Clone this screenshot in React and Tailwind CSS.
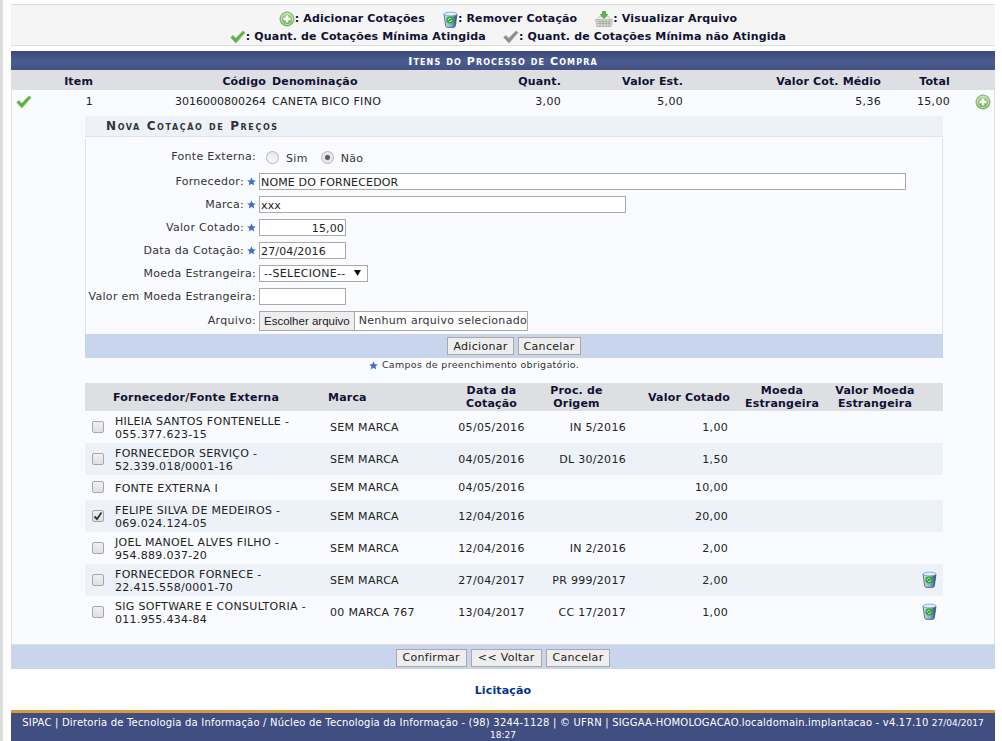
import React from 'react';

const PlusIcon = () => (
    <svg width="16" height="16" viewBox="0 0 16 16" className="shrink-0">
        <defs>
            <linearGradient id="plusFill" x1="0" y1="0" x2="0" y2="1">
                <stop offset="0" stopColor="#b5dca0" />
                <stop offset="1" stopColor="#5cab4a" />
            </linearGradient>
        </defs>
        <circle cx="8" cy="8" r="7" fill="url(#plusFill)" stroke="#7fb06f" strokeWidth="1" />
        <circle cx="8" cy="8" r="5.6" fill="none" stroke="#d6edc9" strokeWidth="0.8" />
        <path d="M6.8 4.5h2.4v2.3h2.3v2.4H9.2v2.3H6.8V9.2H4.5V6.8h2.3z" fill="#fff" />
    </svg>
);

const TrashIcon = () => (
    <svg width="15" height="17" viewBox="0 0 15 17" className="shrink-0">
        <defs>
            <linearGradient id="binFill" x1="0" y1="0" x2="1" y2="0">
                <stop offset="0" stopColor="#c6deee" />
                <stop offset="0.6" stopColor="#7fa9cc" />
                <stop offset="1" stopColor="#1f4570" />
            </linearGradient>
        </defs>
        <path d="M1 3.2 2.6 14.6q.3 1.8 1.7 1.8h6.4q1.4 0 1.7-1.8L14 3.2z" fill="url(#binFill)" stroke="#2a4d6c" strokeWidth="0.7" />
        <ellipse cx="7.5" cy="3" rx="6.6" ry="1.9" fill="#dfeef8" stroke="#6d97b6" strokeWidth="0.7" />
        <circle cx="7" cy="9" r="3.6" fill="#2fa52c" />
        <path d="M5.2 9a1.8 1.8 0 0 1 3-1.2M8.8 9a1.8 1.8 0 0 1-3 1.2" fill="none" stroke="#d5f2cf" strokeWidth="1" />
    </svg>
);

const BasketIcon = () => (
    <svg width="18" height="16" viewBox="0 0 18 16" className="shrink-0">
        <path d="M.6 8.5h16.8l-1.3 7H1.9z" fill="#dcdcd6" stroke="#a4a49c" strokeWidth="0.7" />
        <path d="M2 10.6h14M2.3 12.6h13.4M5 9v6M8 9v6M11 9v6M14 9v6" stroke="#96968f" strokeWidth="0.6" />
        <path d="M2.4 8.5 4 5.6h10l1.6 2.9z" fill="#efefe9" stroke="#b0b0a8" strokeWidth="0.5" />
        <path d="M7.3.5h3.4v3h2.1L9 7.6 5.2 3.5h2.1z" fill="#62b548" stroke="#3f8a2c" strokeWidth="0.6" />
    </svg>
);

const CheckIcon = ({ gray }) => (
    <svg width="16" height="14" viewBox="0 0 16 14" className="shrink-0">
        <path
            d="M.6 7.4 2.8 5.2l2.9 3L13 .8l2.2 1.8L5.9 13.2z"
            fill={gray ? '#8c8c8c' : '#5fae48'}
            stroke={gray ? '#b5b5b5' : '#9bd188'}
            strokeWidth="0.7"
        />
    </svg>
);

const Star = () => (
    <svg width="9" height="9" viewBox="0 0 10 10" className="shrink-0">
        <path d="M5 .3 6.4 3.6l3.4.2-2.6 2.2.9 3.5L5 7.6 1.9 9.5l.9-3.5L.2 3.8l3.4-.2z" fill="#3f6fc4" />
    </svg>
);

const Button = ({ children, wide }) => (
    <button
        type="button"
        className={`h-[18px] border border-[#a9a9a9] bg-[#eeeeee] text-[11px] leading-none tracking-[0.3px] text-[#222] ${wide ? 'px-[6px]' : 'px-[5px]'}`}
    >
        {children}
    </button>
);

const FormRow = ({ label, required, tall, children }) => (
    <div className={`flex items-center ${tall ? 'h-[26px]' : 'h-[23px]'}`}>
        <div className="flex w-[170px] shrink-0 items-center justify-end gap-[3px] whitespace-nowrap text-[#333]">
            {label}
            {required && <Star />}
        </div>
        <div className="ml-[3px] flex items-center">{children}</div>
    </div>
);

const TextInput = ({ value, width, right }) => (
    <input
        readOnly
        value={value}
        className={`h-[17px] border border-[#a9a9a9] bg-white pt-[1px] text-[11px] tracking-[0.15px] text-[#222] outline-none ${width} ${right ? 'px-[1px] text-right' : 'pl-[1px]'}`}
    />
);

const Radio = ({ checked, label }) => (
    <label className="flex items-center">
        <input
            type="radio"
            readOnly
            checked={checked}
            className="h-[13px] w-[13px] appearance-none rounded-full border border-[#b5b5b5] bg-[linear-gradient(#e8e8e8,#f8f8f8)] checked:bg-[radial-gradient(circle,#555_0,#666_28%,#e4e4e4_38%,#f4f4f4_100%)]"
        />
        <span className="ml-[7px] mt-[3px] text-[#333]">{label}</span>
    </label>
);

const cotacoes = [
    { nome: ['HILEIA SANTOS FONTENELLE -', '055.377.623-15'], marca: 'SEM MARCA', data: '05/05/2016', proc: 'IN 5/2016', valor: '1,00' },
    { nome: ['FORNECEDOR SERVIÇO -', '52.339.018/0001-16'], marca: 'SEM MARCA', data: '04/05/2016', proc: 'DL 30/2016', valor: '1,50' },
    { nome: ['FONTE EXTERNA I'], marca: 'SEM MARCA', data: '04/05/2016', proc: '', valor: '10,00' },
    { nome: ['FELIPE SILVA DE MEDEIROS -', '069.024.124-05'], marca: 'SEM MARCA', data: '12/04/2016', proc: '', valor: '20,00', checked: true },
    { nome: ['JOEL MANOEL ALVES FILHO -', '954.889.037-20'], marca: 'SEM MARCA', data: '12/04/2016', proc: 'IN 2/2016', valor: '2,00' },
    { nome: ['FORNECEDOR FORNECE -', '22.415.558/0001-70'], marca: 'SEM MARCA', data: '27/04/2017', proc: 'PR 999/2017', valor: '2,00', remove: true },
    { nome: ['SIG SOFTWARE E CONSULTORIA -', '011.955.434-84'], marca: '00 MARCA 767', data: '13/04/2017', proc: 'CC 17/2017', valor: '1,00', remove: true },
];

const itemCols = 'grid grid-cols-[82px_173px_134px_161px_122px_198px_69px_45px] items-center';
const cotCols = 'grid grid-cols-[28px_215px_130px_67px_103px_102px_2px_100px_86px_25px] items-center';

const App = () => {
    return (
        <div className="h-[741px] overflow-hidden bg-white font-['DejaVu_Sans','Liberation_Sans',sans-serif] text-[11px] leading-[14px] tracking-[0.3px] text-[#222]">
            <div className="absolute left-0 top-0 h-[741px] w-[3px] bg-[#dddddd]" />
            <div className="ml-[11px] w-[984px] pt-[4px]">
                {/* Legenda */}
                <div className="h-[42px] border-y border-[#dcdcdc] bg-[#f5f5f5] pl-[10px] pt-[5px] font-bold tracking-[0.15px] text-[#111133]">
                    <div className="flex h-[18px] items-center justify-center">
                        <PlusIcon />
                        <span className="mr-[18px]">: Adicionar Cotações</span>
                        <TrashIcon />
                        <span className="mr-[18px]">: Remover Cotação</span>
                        <BasketIcon />
                        <span>: Visualizar Arquivo</span>
                    </div>
                    <div className="flex h-[18px] items-center justify-center">
                        <CheckIcon />
                        <span className="mr-[17px]">: Quant. de Cotações Mínima Atingida</span>
                        <CheckIcon gray />
                        <span>: Quant. de Cotações Mínima não Atingida</span>
                    </div>
                </div>

                {/* Itens */}
                <div className="mt-[5px] flex h-[19px] items-center justify-center bg-[linear-gradient(#3c4a78,#4c5c90_55%,#435282)] pt-[2px] font-bold tracking-[1.1px] text-white [font-variant:small-caps]">
                    Itens do Processo de Compra
                </div>
                <div className={`${itemCols} h-[20px] bg-[#dedfe3] pt-[4px] font-bold tracking-[0.15px] text-[#111133]`}>
                    <div className="text-right">Item</div>
                    <div className="text-right">Código</div>
                    <div className="pl-[6px]">Denominação</div>
                    <div className="text-right">Quant.</div>
                    <div className="text-right">Valor Est.</div>
                    <div className="text-right">Valor Cot. Médio</div>
                    <div className="text-right">Total</div>
                    <div />
                </div>
                <div className="h-[554px] border-x border-[#e2e3e8] bg-[#fafbfe]">
                    <div className={`${itemCols} -ml-[1px] h-[26px] pb-[2px]`}>
                        <div className="flex items-center justify-between pl-[5px]">
                            <CheckIcon />
                            <span>1</span>
                        </div>
                        <div className="text-right tracking-normal">3016000800264</div>
                        <div className="whitespace-nowrap pl-[6px]">CANETA BICO FINO</div>
                        <div className="text-right">3,00</div>
                        <div className="text-right">5,00</div>
                        <div className="text-right">5,36</div>
                        <div className="text-right">15,00</div>
                        <div className="flex justify-end pr-[4px]"><PlusIcon /></div>
                    </div>

                    {/* Nova cotação */}
                    <div className="ml-[73px] w-[858px]">
                        <div className="flex h-[21px] items-center border-b border-[#dfe4ee] bg-[#edf1f8] pl-[21px] text-[12px] font-bold tracking-[1.6px] text-[#333] [font-variant:small-caps]">
                            Nova Cotação de Preços
                        </div>
                        <div className="mt-[2px] border-x border-[#e2e3e8] pt-[5px]">
                            <FormRow label="Fonte Externa:" tall>
                                <div className="flex gap-[13px] pl-[7px]">
                                    <Radio label="Sim" />
                                    <Radio label="Não" checked />
                                </div>
                            </FormRow>
                            <FormRow label="Fornecedor:" required>
                                <TextInput value="NOME DO FORNECEDOR" width="w-[647px]" />
                            </FormRow>
                            <FormRow label="Marca:" required>
                                <TextInput value="xxx" width="w-[367px]" />
                            </FormRow>
                            <FormRow label="Valor Cotado:" required>
                                <TextInput value="15,00" width="w-[87px]" right />
                            </FormRow>
                            <FormRow label="Data da Cotação:" required>
                                <TextInput value="27/04/2016" width="w-[87px]" />
                            </FormRow>
                            <FormRow label="Moeda Estrangeira:">
                                <div className="relative h-[17px] w-[109px] border border-[#a9a9a9] bg-white pl-[4px] text-[11px] leading-[15px] text-[#222]">
                                    --SELECIONE--
                                    <svg width="7" height="6" viewBox="0 0 7 6" className="absolute right-[6px] top-[4px]">
                                        <path d="M0 0h7L3.5 6z" fill="#111" />
                                    </svg>
                                </div>
                            </FormRow>
                            <FormRow label="Valor em Moeda Estrangeira:">
                                <TextInput value="" width="w-[87px]" />
                            </FormRow>
                            <FormRow label="Arquivo:" tall>
                                <div className="flex h-[20px] w-[269px] items-center border border-[#a9a9a9] bg-white">
                                    <div className="flex h-full w-[98px] items-center justify-center border-r border-[#a9a9a9] bg-[#eeeeee] font-['Liberation_Sans',sans-serif] text-[11.5px] tracking-normal text-[#222]">
                                        Escolher arquivo
                                    </div>
                                    <span className="ml-[4px] whitespace-nowrap text-[#333]">Nenhum arquivo selecionado</span>
                                </div>
                            </FormRow>
                        </div>
                        <div className="flex h-[24px] items-center justify-center gap-[4px] bg-[#c8d5ec]">
                            <Button>Adicionar</Button>
                            <Button>Cancelar</Button>
                        </div>
                        <div className="flex h-[14px] items-center justify-center gap-[4px] pr-[80px] text-[9.5px] text-[#333]">
                            <Star />
                            Campos de preenchimento obrigatório.
                        </div>

                        {/* Cotações */}
                        <div className={`${cotCols} mt-[11px] h-[28px] bg-[#dedfe3] font-bold leading-[13px] tracking-[0.2px] text-[#111133]`}>
                            <div />
                            <div>Fornecedor/Fonte Externa</div>
                            <div>Marca</div>
                            <div className="text-center">Data da<br />Cotação</div>
                            <div className="text-center">Proc. de<br />Origem</div>
                            <div className="text-right">Valor Cotado</div>
                            <div />
                            <div className="text-center">Moeda<br />Estrangeira</div>
                            <div className="text-center">Valor Moeda<br />Estrangeira</div>
                            <div />
                        </div>
                        {cotacoes.map((c, i) => (
                            <div
                                key={i}
                                className={`${cotCols} ${c.nome.length > 1 ? 'h-[32px]' : 'h-[25px]'} pt-[1px] ${i % 2 === 1 ? 'bg-[#edf1f8]' : 'bg-[#fafbfe]'}`}
                            >
                                <div className="relative -mt-[2px] flex justify-center pr-[2px]">
                                    <input
                                        type="checkbox"
                                        readOnly
                                        checked={!!c.checked}
                                        className="h-[12px] w-[12px] appearance-none rounded-[2px] border border-[#a8a8a8] bg-[linear-gradient(#f0f0f0,#e0e0e0)]"
                                    />
                                    {c.checked && (
                                        <svg width="10" height="10" viewBox="0 0 10 10" className="absolute top-[1px]">
                                            <path d="M1.5 5.5 4 8l4.5-6.5" fill="none" stroke="#333" strokeWidth="1.8" />
                                        </svg>
                                    )}
                                </div>
                                <div className="pl-[2px] leading-[13px]">
                                    {c.nome.map((n) => <div key={n} className="whitespace-nowrap">{n}</div>)}
                                </div>
                                <div className="pl-[2px]">{c.marca}</div>
                                <div className="text-center">{c.data}</div>
                                <div className="pr-[2px] text-right">{c.proc}</div>
                                <div className="pr-[2px] text-right">{c.valor}</div>
                                <div />
                                <div />
                                <div />
                                <div className="-mt-[2px] flex justify-start pl-[4px]">
                                    {c.remove && <TrashIcon />}
                                </div>
                            </div>
                        ))}
                    </div>
                </div>

                {/* Botões */}
                <div className="flex h-[25px] items-center justify-center gap-[4px] border-t border-[#dcdde2] bg-[#c8d5ec] pt-[1px]">
                    <Button wide>Confirmar</Button>
                    <Button wide>&lt;&lt; Voltar</Button>
                    <Button wide>Cancelar</Button>
                </div>
                <div className="flex h-[41px] items-center justify-center pt-[2px] font-bold tracking-[0.15px] text-[#003390]">
                    Licitação
                </div>
                <div className="h-[31px] border-t-[3px] border-[#d99a3c] bg-[#404e82] px-[8px] pt-[4px] text-center text-[10px] leading-[12px] tracking-[0.2px] text-white">
                    SIPAC | Diretoria de Tecnologia da Informação / Núcleo de Tecnologia da Informação - (98) 3244-1128 | © UFRN | SIGGAA-HOMOLOGACAO.localdomain.implantacao - v4.17.10 <span className="text-[9px] tracking-normal">27/04/2017</span>
                    <br />
                    <span className="text-[9px] tracking-normal">18:27</span>
                </div>
            </div>
        </div>
    );
};

export default App;
